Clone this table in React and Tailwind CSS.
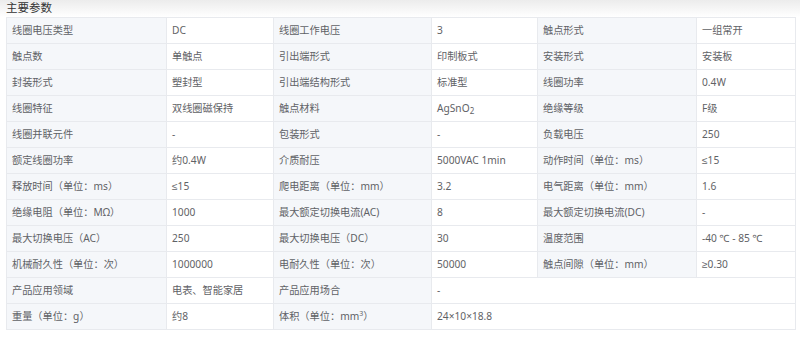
const rows = [
  ["线圈电压类型", "DC", "线圈工作电压", "3", "触点形式", "一组常开"],
  ["触点数", "单触点", "引出端形式", "印制板式", "安装形式", "安装板"],
  ["封装形式", "塑封型", "引出端结构形式", "标准型", "线圈功率", "0.4W"],
  ["线圈特征", "双线圈磁保持", "触点材料", "AgSnO2", "绝缘等级", "F级"],
  ["线圈并联元件", "-", "包装形式", "-", "负载电压", "250"],
  ["额定线圈功率", "约0.4W", "介质耐压", "5000VAC 1min", "动作时间（单位：ms）", "≤15"],
  ["释放时间（单位：ms）", "≤15", "爬电距离（单位：mm）", "3.2", "电气距离（单位：mm）", "1.6"],
  ["绝缘电阻（单位：MΩ）", "1000", "最大额定切换电流(AC)", "8", "最大额定切换电流(DC)", "-"],
  ["最大切换电压（AC）", "250", "最大切换电压（DC）", "30", "温度范围", "-40 ℃ - 85 ℃"],
  ["机械耐久性（单位：次）", "1000000", "电耐久性（单位：次）", "50000", "触点间隙（单位：mm）", "≥0.30"],
  ["产品应用领域", "电表、智能家居", "产品应用场合", "-"],
  ["重量（单位：g）", "约8", "体积（单位：mm3）", "24×10×18.8"],
];

function renderText(text) {
  if (text === "AgSnO2") {
    return (
      <>
        AgSnO<sub className="text-[8px]">2</sub>
      </>
    );
  }
  if (text.includes("mm3")) {
    const [a, b] = text.split("mm3");
    return (
      <>
        {a}mm<sup className="text-[7px]">3</sup>
        {b}
      </>
    );
  }
  return text;
}

const labelCls = "border border-[#e8eaee] bg-[#f5f7fa] pl-[5px] pr-1 text-left font-normal whitespace-nowrap";
const valueCls = "border border-[#e8eaee] bg-white pl-[5px] pr-1 text-left whitespace-nowrap";

export default function App() {
  return (
    <div
      className="w-[800px] h-[348px] bg-white text-[#5f6266] overflow-hidden"
      style={{ fontFamily: '"Noto Sans", "Liberation Sans", "Noto Sans CJK SC", sans-serif' }}
    >
      <div className="h-[17px] bg-gradient-to-b from-[#ececec] to-white px-[6px]">
        <div className="text-[11.5px] leading-[16px] text-[#333]">主要参数</div>
      </div>
      <div className="px-[6px]">
        <table className="w-[789px] border-collapse table-fixed text-[10.2px]">
          <colgroup>
            <col className="w-[160px]" />
            <col className="w-[107px]" />
            <col className="w-[158px]" />
            <col className="w-[106px]" />
            <col className="w-[159px]" />
            <col className="w-[99px]" />
          </colgroup>
          <tbody>
            {rows.map((r, i) => (
              <tr key={i} className="h-[26px]">
                <td className={labelCls}>{renderText(r[0])}</td>
                <td className={valueCls}>{renderText(r[1])}</td>
                <td className={labelCls}>{renderText(r[2])}</td>
                {r.length === 6 ? (
                  <>
                    <td className={valueCls}>{renderText(r[3])}</td>
                    <td className={labelCls}>{renderText(r[4])}</td>
                    <td className={valueCls}>{renderText(r[5])}</td>
                  </>
                ) : (
                  <td colSpan={3} className={valueCls}>
                    {renderText(r[3])}
                  </td>
                )}
              </tr>
            ))}
          </tbody>
        </table>
      </div>
    </div>
  );
}
